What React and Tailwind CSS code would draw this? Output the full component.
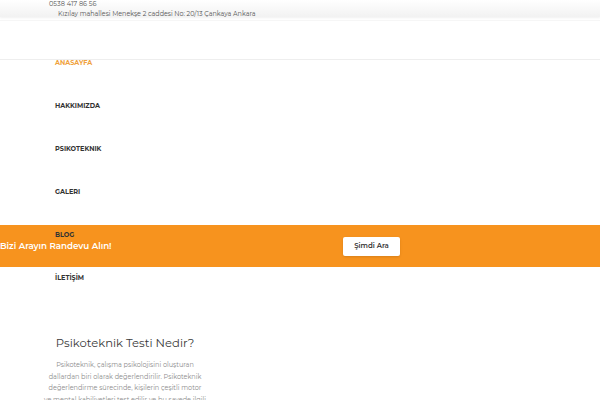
import React from "react";

const font = { fontFamily: '"Montserrat", "Inter", "Noto Sans", sans-serif' };

export default function App() {
  const nav = ["ANASAYFA", "HAKKIMIZDA", "PSIKOTEKNIK", "GALERI", "BLOG", "İLETİŞİM"];
  return (
    <div className="relative w-[600px] h-[400px] overflow-hidden bg-white" style={font}>
      <div className="h-[17px] bg-gradient-to-b from-white to-[#f2f2f2] shadow-[0_1px_2px_rgba(0,0,0,0.06)] relative">
        <div className="absolute left-[49px] top-[0px] text-[6.6px] leading-[9px] text-[#555]">0538 417 86 56</div>
        <div className="absolute left-[58px] top-[10px] text-[6.4px] leading-[9px] text-[#555] whitespace-nowrap">
          Kızılay mahallesi Menekşe 2 caddesi No: 20/13 Çankaya Ankara
        </div>
      </div>
      <div className="h-[40px] border-t border-[#f6f6f6] border-b border-b-[#eeeeee] mt-[3px]"></div>
      <div className="h-[165px]"></div>
      <div className="h-[42px] bg-[#f7931e] flex items-center justify-between pr-[200px]">
        <div className="text-white text-[8.7px] font-semibold pt-[2px]">Bizi Arayın Randevu Alın!</div>
        <div className="bg-white rounded-[2px] w-[57px] h-[19px] flex items-center justify-center text-[7px] font-semibold text-[#333] shadow-sm">
          Şimdi Ara
        </div>
      </div>
      <div className="w-[250px] flex flex-col items-center pt-[68px]">
        <div className="text-[11.6px] text-[#3a3a3a] leading-[16px]">Psikoteknik Testi Nedir?</div>
        <div className="mt-[9px] text-center text-[6.5px] leading-[11.6px] text-[#8c8c8c] whitespace-nowrap">
          Psikoteknik, çalışma psikolojisini oluşturan
          <br />
          dallardan biri olarak değerlendirilir. Psikoteknik
          <br />
          değerlendirme sürecinde, kişilerin çeşitli motor
          <br />
          ve mental kabiliyetleri test edilir ve bu sayede ilgili
        </div>
      </div>
      <div className="absolute left-[55px] top-[59px] flex flex-col">
        {nav.map((n, i) => (
          <div
            key={n}
            className={
              "h-[43px] text-[6.5px] font-bold leading-[9px] " +
              (i === 0 ? "text-[#f0a23e]" : "text-[#333]")
            }
          >
            {n}
          </div>
        ))}
      </div>
    </div>
  );
}
